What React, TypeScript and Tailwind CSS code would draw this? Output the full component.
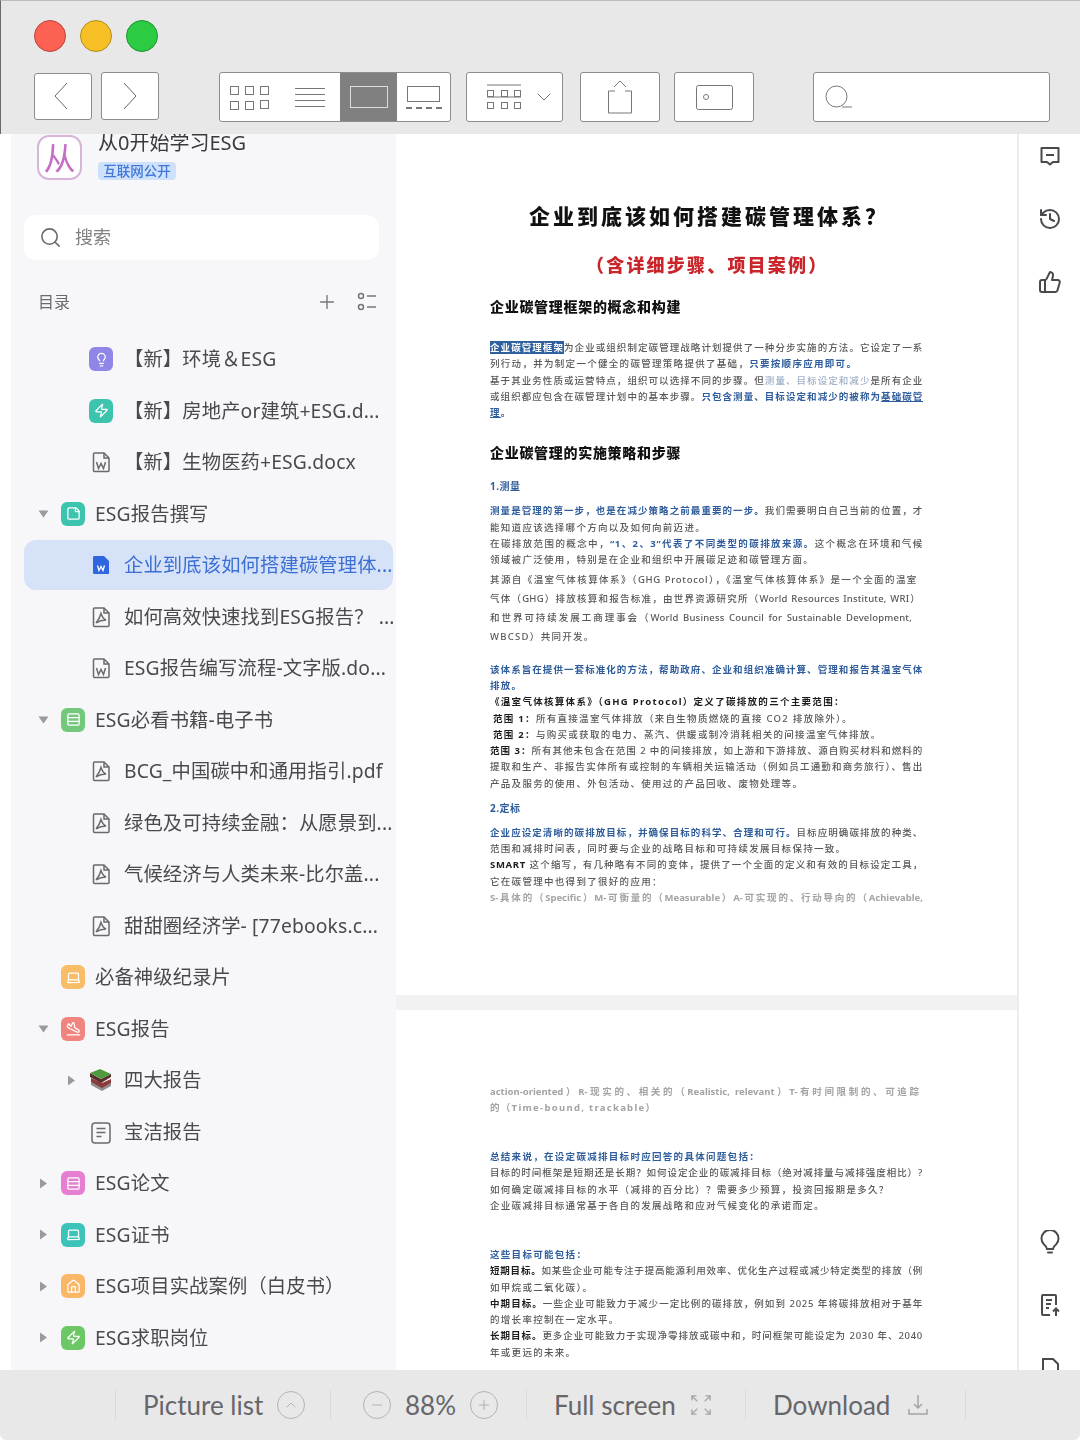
import React from 'react';
import { ChevronDown, ChevronRight, History, Home, Laptop, Lightbulb, Minus, PlaneLanding, Plus, Rows3, Search, StickyNote, ThumbsUp, Zap } from 'lucide-react';

const cjk = { fontFamily: '"Noto Sans", "Noto Sans CJK SC", sans-serif' };

function WordIcon({ active = false }: { active?: boolean }) {
  if (active) {
    return (
      <svg viewBox="0 0 24 24" className="w-6 h-6">
        <path d="M5 3h10l5 5v13H5.500a1.500 1.500 0 0 1-1.500-1.500V4.500A1.500 1.500 0 0 1 5 3z" fill="#2f66e0" />
        <path d="M8.500 12.500l1.500 5 2-4 2 4 1.500-5" fill="none" stroke="#fff" strokeWidth="1.300" />
      </svg>
    );
  }
  return (
    <svg viewBox="0 0 24 24" className="w-6 h-6" fill="none" stroke="#6a6a6e" strokeWidth="1.500">
      <path d="M5.500 3H15l5 5v12.500a1 1 0 0 1-1 1H5.500a1 1 0 0 1-1-1V4a1 1 0 0 1 1-1z" />
      <path d="M15 3v5h5" />
      <path d="M7.500 12l2 6.500 2.500-5 2.500 5 2-6.500" />
    </svg>
  );
}

function PdfIcon() {
  return (
    <svg viewBox="0 0 24 24" className="w-6 h-6" fill="none" stroke="#6a6a6e" strokeWidth="1.500">
      <path d="M5.500 3H15l5 5v12.500a1 1 0 0 1-1 1H5.500a1 1 0 0 1-1-1V4a1 1 0 0 1 1-1z" />
      <path d="M15 3v5h5" />
      <path d="M12 8.500c-.8 3-2.500 6.500-5 9.500 3-2 6.500-3 10-3-2.500-1-4-3.500-5-6.500z" />
    </svg>
  );
}

function NoteIcon() {
  return (
    <svg viewBox="0 0 24 24" className="w-6 h-6" fill="none" stroke="#6a6a6e" strokeWidth="1.500">
      <rect x="3" y="3" width="18" height="20" rx="3" />
      <path d="M7.500 8.500h9M7.500 12.500h9M7.500 16.500h5" />
    </svg>
  );
}

function BooksIcon() {
  return (
    <svg viewBox="0 0 24 24" className="w-6 h-6">
      <path d="M2 14l11 5 9-4v3l-9 5-11-6z" fill="#8f8f8f" />
      <path d="M2 10l11 5 9-4v4l-9 5-11-6z" fill="#8c3a3a" />
      <path d="M1 5l11 6 10-5v3l-10 6-11-6z" fill="#5b2d2d" />
      <path d="M1 5l10-4 11 5-10 5z" fill="#4f9a3f" />
    </svg>
  );
}

function Tile({ color, children }: { color: string; children: React.ReactNode }) {
  return <span className={`w-6 h-6 rounded-md flex items-center justify-center shrink-0 ${color}`}>{children}</span>;
}

const tileIcon = 'w-[15px] h-[15px] text-white';

const rows = [
  { level: 2, text: '【新】环境＆ESG', icon: <Tile color="bg-[#8f86e8]"><Lightbulb className={tileIcon} /></Tile> },
  { level: 2, text: '【新】房地产or建筑+ESG.d...', icon: <Tile color="bg-[#3cc4ae]"><Zap className={tileIcon} /></Tile> },
  { level: 2, text: '【新】生物医药+ESG.docx', icon: <WordIcon /> },
  { level: 1, arrow: 'down', text: 'ESG报告撰写', icon: <Tile color="bg-[#3cc4ae]"><StickyNote className={tileIcon} /></Tile> },
  { level: 2, active: true, text: '企业到底该如何搭建碳管理体...', icon: <WordIcon active /> },
  { level: 2, text: '如何高效快速找到ESG报告？ ...', icon: <PdfIcon /> },
  { level: 2, text: 'ESG报告编写流程-文字版.do...', icon: <WordIcon /> },
  { level: 1, arrow: 'down', text: 'ESG必看书籍-电子书', icon: <Tile color="bg-[#74c87c]"><Rows3 className={tileIcon} /></Tile> },
  { level: 2, text: 'BCG_中国碳中和通用指引.pdf', icon: <PdfIcon /> },
  { level: 2, text: '绿色及可持续金融：从愿景到...', icon: <PdfIcon /> },
  { level: 2, text: '气候经济与人类未来-比尔盖...', icon: <PdfIcon /> },
  { level: 2, text: '甜甜圈经济学- [77ebooks.c...', icon: <PdfIcon /> },
  { level: 1, text: '必备神级纪录片', icon: <Tile color="bg-[#f9bd68]"><Laptop className={tileIcon} /></Tile> },
  { level: 1, arrow: 'down', text: 'ESG报告', icon: <Tile color="bg-[#f0857f]"><PlaneLanding className={tileIcon} /></Tile> },
  { level: 2, arrow: 'right', text: '四大报告', icon: <BooksIcon /> },
  { level: 2, text: '宝洁报告', icon: <NoteIcon /> },
  { level: 1, arrow: 'right', text: 'ESG论文', icon: <Tile color="bg-[#e77fd0]"><Rows3 className={tileIcon} /></Tile> },
  { level: 1, arrow: 'right', text: 'ESG证书', icon: <Tile color="bg-[#3cc4bb]"><Laptop className={tileIcon} /></Tile> },
  { level: 1, arrow: 'right', text: 'ESG项目实战案例（白皮书）', icon: <Tile color="bg-[#f9b768]"><Home className={tileIcon} /></Tile> },
  { level: 1, arrow: 'right', text: 'ESG求职岗位', icon: <Tile color="bg-[#6cc765]"><Zap className={tileIcon} /></Tile> },
];

function Arrow({ dir }: { dir?: string }) {
  if (!dir) return <span className="w-[11px] shrink-0" />;
  return (
    <span className="w-[11px] h-[11px] shrink-0 flex items-center justify-center">
      <svg viewBox="0 0 11 11" className="w-[11px] h-[11px]" fill="#9a9a9e">
        {dir === 'down' ? <path d="M0.500 2.500h10l-5 7z" /> : <path d="M2 0.500l7 5-7 5z" />}
      </svg>
    </span>
  );
}

function Sidebar() {
  return (
    <aside className="w-[385px] ml-[11px] bg-[#f7f7fa] shrink-0 overflow-hidden blur-[0.3px]">
      <div className="flex h-[45px] mt-px pl-[26px] gap-4">
        <div className="w-[45px] h-[45px] rounded-xl border-2 border-[#d8b4d8] bg-white flex items-center justify-center text-[32px] leading-none text-[#c46fc4]">从</div>
        <div className="-mt-[2px]">
          <div className="h-5 text-[20px] leading-5 text-[#3a3a3d] whitespace-nowrap">从0开始学习ESG</div>
          <div className="mt-[9px] w-[78px] h-[18px] rounded bg-[#cfe0fb] text-[13.500px] leading-[18px] text-center font-medium text-[#3f78d8]">互联网公开</div>
        </div>
      </div>

      <div className="ml-[13px] mt-[35px] w-[355px] h-[45px] rounded-xl bg-white flex items-center pl-[15px] gap-[13px] text-[18px] text-[#808083]">
        <Search className="w-[23px] h-[23px] text-[#6c6c70]" strokeWidth={1.7} />
        搜索
      </div>

      <div className="mt-[30px] h-6 flex items-center pl-[27px] text-[16px] text-[#6a6a6e]">
        <span>目录</span>
        <Plus className="w-[22px] h-[22px] ml-[246px] text-[#77777b]" strokeWidth={1.5} />
        <svg viewBox="0 0 22 22" className="w-[22px] h-[22px] ml-[18px]" fill="none" stroke="#77777b" strokeWidth="1.500">
          <circle cx="5" cy="5" r="2.500" />
          <circle cx="5" cy="16" r="2.500" />
          <path d="M11 5h9M11 16h9" />
        </svg>
      </div>

      <div className="ml-[13px] w-[369px] mt-[19.250px]">
        {rows.map((row) => (
          <div key={row.text} className="h-[51.500px] flex items-center">
            <div className={`w-full h-[50px] flex items-center rounded-xl text-[19.300px] tracking-[0.150px] whitespace-nowrap ${row.level === 1 ? 'pl-[14px]' : 'pl-[42px]'} ${row.active ? 'bg-[#d6e2f7] text-[#3b6fd4]' : 'text-[#4a4a4e]'}`}>
              <Arrow dir={row.arrow} />
              <span className="ml-3 w-6 h-6 shrink-0 flex items-center justify-center">{row.icon}</span>
              <span className={`pt-px ${row.level === 1 ? 'ml-[10px]' : 'ml-[11px]'}`}>{row.text}</span>
            </div>
          </div>
        ))}
      </div>
    </aside>
  );
}

function Line({ children, j = true, className = '' }: { children: React.ReactNode; j?: boolean; className?: string }) {
  return (
    <div className={`whitespace-nowrap text-[9.500px] font-medium text-[#58585b] ${j ? 'tracking-[0.700px] [text-align-last:justify]' : 'tracking-[1.300px]'} ${className || 'h-[16.250px] leading-[16.250px]'}`}>
      {children}
    </div>
  );
}

function B({ children }: { children: React.ReactNode }) {
  return <span className="font-bold text-[#2f5d9c]">{children}</span>;
}

function K({ children }: { children: React.ReactNode }) {
  return <span className="font-bold text-[#1c1c1e]">{children}</span>;
}

function H({ children, className = '' }: { children: React.ReactNode; className?: string }) {
  return <div className={`h-5 leading-5 text-[14px] tracking-[0.700px] font-black text-[#111] ${className}`}>{children}</div>;
}

function Sub({ children, className = '' }: { children: React.ReactNode; className?: string }) {
  return <div className={`h-4 leading-4 text-[10px] tracking-[0.500px] font-bold text-[#2f5d9c] ${className}`}>{children}</div>;
}

function Document() {
  return (
    <main className="flex-1 flex flex-col min-w-0 overflow-hidden bg-[#f2f2f3] blur-[0.4px]">
      <section className="h-[861px] shrink-0 bg-white pl-[94px] pr-[94px]">
        <div className="mt-[67px] h-[30px] leading-[30px] text-[21px] tracking-[3px] font-black text-[#111] whitespace-nowrap ml-[39px]">企业到底该如何搭建碳管理体系？</div>
        <div className="mt-[21px] h-[26px] leading-[26px] text-[18px] tracking-[2.200px] font-black text-[#c9252b] whitespace-nowrap ml-[96px]">（含详细步骤、项目案例）</div>
        <H className="mt-[19px]">企业碳管理框架的概念和构建</H>
        <div className="mt-[23px]">
          <Line><span className="bg-[#2e5f9e] text-white font-bold">企业碳管理框架</span>为企业或组织制定碳管理战略计划提供了一种分步实施的方法。它设定了一系</Line>
          <Line j={false}>列行动，并为制定一个健全的碳管理策略提供了基础，<B>只要按顺序应用即可。</B></Line>
          <Line>基于其业务性质或运营特点，组织可以选择不同的步骤。但<span className="text-[#9fb0c8]">测量、目标设定和减少</span>是所有企业</Line>
          <Line>或组织都应包含在碳管理计划中的基本步骤。<B>只包含测量、目标设定和减少的被称为<span className="underline">基础碳管</span></B></Line>
          <Line j={false}><B><span className="underline">理</span>。</B></Line>
        </div>
        <H className="mt-[22px]">企业碳管理的实施策略和步骤</H>
        <Sub className="mt-[15px]">1.测量</Sub>
        <div className="mt-[9px]">
          <Line><B>测量是管理的第一步，也是在减少策略之前最重要的一步。</B>我们需要明白自己当前的位置，才</Line>
          <Line j={false}>能知道应该选择哪个方向以及如何向前迈进。</Line>
          <Line>在碳排放范围的概念中，<B>“1、2、3”代表了不同类型的碳排放来源。</B>这个概念在环境和气候</Line>
          <Line j={false}>领域被广泛使用，特别是在企业和组织中开展碳足迹和碳管理方面。</Line>
        </div>
        <div className="mt-[2px]">
          <Line className="h-[19px] leading-[19px] w-[427px]">其源自《温室气体核算体系》（GHG Protocol），《温室气体核算体系》是一个全面的温室</Line>
          <Line className="h-[19px] leading-[19px] w-[430px] !tracking-[0.200px]">气体（GHG）排放核算和报告标准，由世界资源研究所（World Resources Institute, WRI）</Line>
          <Line className="h-[19px] leading-[19px] w-[422px] !tracking-[0.200px]">和世界可持续发展工商理事会（World Business Council for Sustainable Development,</Line>
          <Line j={false} className="h-[19px] leading-[19px]">WBCSD）共同开发。</Line>
        </div>
        <div className="mt-[15.500px]">
          <Line><B>该体系旨在提供一套标准化的方法，帮助政府、企业和组织准确计算、管理和报告其温室气体</B></Line>
          <Line j={false}><B>排放。</B></Line>
          <Line j={false} className="h-[16.250px] leading-[16.250px] w-[350px]"><K>《温室气体核算体系》（GHG Protocol）定义了碳排放的三个主要范围：</K></Line>
          <Line j={false}><span className="ml-[3px]" /><K>范围 1：</K>所有直接温室气体排放（来自生物质燃烧的直接 CO2 排放除外）。</Line>
          <Line j={false}><span className="ml-[3px]" /><K>范围 2：</K>与购买或获取的电力、蒸汽、供暖或制冷消耗相关的间接温室气体排放。</Line>
          <Line><K>范围 3：</K>所有其他未包含在范围 2 中的间接排放，如上游和下游排放、源自购买材料和燃料的</Line>
          <Line>提取和生产、非报告实体所有或控制的车辆相关运输活动（例如员工通勤和商务旅行）、售出</Line>
          <Line j={false}>产品及服务的使用、外包活动、使用过的产品回收、废物处理等。</Line>
        </div>
        <Sub className="mt-[8px]">2.定标</Sub>
        <div className="mt-[9px]">
          <Line><B>企业应设定清晰的碳排放目标，并确保目标的科学、合理和可行。</B>目标应明确碳排放的种类、</Line>
          <Line j={false}>范围和减排时间表，同时要与企业的战略目标和可持续发展目标保持一致。</Line>
          <Line><K>SMART</K> 这个缩写，有几种略有不同的变体，提供了一个全面的定义和有效的目标设定工具，</Line>
          <Line j={false}>它在碳管理中也得到了很好的应用：</Line>
          <Line className="h-[16.250px] leading-[16.250px] !text-[#a3a3a6] !font-bold !tracking-[0px]">S-具体的（Specific）M-可衡量的（Measurable）A-可实现的、行动导向的（Achievable,</Line>
        </div>
      </section>

      <section className="flex-1 mt-[15px] bg-white pl-[94px] pr-[94px]">
        <div className="mt-[74px]">
          <Line className="h-[16.250px] leading-[16.250px] w-[429px] !text-[#a3a3a6] !font-bold !tracking-[0px]">action-oriented）R-现实的、相关的（Realistic, relevant）T-有时间限制的、可追踪</Line>
          <Line j={false} className="h-[16.250px] leading-[16.250px] !text-[#a3a3a6] !font-bold">的（Time-bound, trackable）</Line>
        </div>
        <div className="mt-[32.500px]">
          <Line j={false}><B>总结来说，在设定碳减排目标时应回答的具体问题包括：</B></Line>
          <Line>目标的时间框架是短期还是长期？如何设定企业的碳减排目标（绝对减排量与减排强度相比）?</Line>
          <Line j={false}>如何确定碳减排目标的水平（减排的百分比）？需要多少预算，投资回报期是多久？</Line>
          <Line j={false}>企业碳减排目标通常基于各自的发展战略和应对气候变化的承诺而定。</Line>
        </div>
        <div className="mt-[33px]">
          <Line j={false}><B>这些目标可能包括：</B></Line>
          <Line><K>短期目标。</K>如某些企业可能专注于提高能源利用效率、优化生产过程或减少特定类型的排放（例</Line>
          <Line j={false}>如甲烷或二氧化碳）。</Line>
          <Line><K>中期目标。</K>一些企业可能致力于减少一定比例的碳排放，例如到 2025 年将碳排放相对于基年</Line>
          <Line j={false}>的增长率控制在一定水平。</Line>
          <Line><K>长期目标。</K>更多企业可能致力于实现净零排放或碳中和，时间框架可能设定为 2030 年、2040</Line>
          <Line j={false}>年或更远的未来。</Line>
        </div>
      </section>
    </main>
  );
}

function RightRail() {
  const cls = 'w-6 h-6 text-[#4a4a4e]';
  return (
    <div className="w-[63px] shrink-0 bg-white border-l-2 border-[#ececee] flex flex-col justify-between items-center overflow-hidden pt-[10px]">
      <div className="flex flex-col gap-[39px]">
        <svg viewBox="0 0 24 24" className={cls} fill="none" stroke="currentColor" strokeWidth="2" strokeLinejoin="round">
          <path d="M3.500 4h17v14H15l-3 2.500L9 18H3.500z" />
          <path d="M8 11h8" />
        </svg>
        <History className={cls} strokeWidth={2} />
        <ThumbsUp className={cls} strokeWidth={2} />
      </div>
      <div className="flex flex-col gap-[39px] -mb-[10px]">
        <svg viewBox="0 0 24 24" className={cls} fill="none" stroke="currentColor" strokeWidth="2" strokeLinecap="round">
          <path d="M9 19c0-2-1-3-3-4.500A8.500 8.500 0 1 1 18 14.500c-2 1.500-3 2.500-3 4.500z" />
          <path d="M10 22.500h4" />
        </svg>
        <svg viewBox="0 0 24 24" className={cls} fill="none" stroke="currentColor" strokeWidth="2">
          <path d="M12 22H5a1 1 0 0 1-1-1V3a1 1 0 0 1 1-1h12a1 1 0 0 1 1 1v9" />
          <path d="M8 7h6M8 11h5M8 15h3" />
          <path d="M18 23v-7M15 18.500l3-3 3 3" />
        </svg>
        <svg viewBox="0 0 24 24" className={cls} fill="none" stroke="currentColor" strokeWidth="2">
          <path d="M5 3h10l5 5v13H5z" />
          <path d="M8 16h8" />
        </svg>
      </div>
    </div>
  );
}

const btn = 'bg-white border border-[#8d8d8d] rounded-[3px] shrink-0 flex items-center justify-center';

function Toolbar() {
  return (
    <header className="h-[134px] shrink-0 bg-[#e8e8e8] border-t border-t-[#bdbdbd] border-l border-l-[#6a6a6a]">
      <div className="flex gap-[14px] pl-[33px] pt-[19px]">
        <span className="w-8 h-8 rounded-full bg-[#fd6152] border border-[#b8473c]" />
        <span className="w-8 h-8 rounded-full bg-[#f6c026] border border-[#b48d1c]" />
        <span className="w-8 h-8 rounded-full bg-[#2bcb43] border border-[#1f9531]" />
      </div>
      <div className="flex items-center mt-[20px] pl-[33px] h-[50px]">
        <div className={`${btn} w-[58px] h-[47px] -mt-[2px] pr-1`}>
          <svg viewBox="0 0 16 28" className="w-4 h-7" fill="none" stroke="#666" strokeWidth="1"><path d="M14 1L2 14l12 13" /></svg>
        </div>
        <div className={`${btn} w-[58px] h-[48px] ml-[9px] -mt-[2px]`}>
          <svg viewBox="0 0 16 28" className="w-4 h-7" fill="none" stroke="#666" strokeWidth="1"><path d="M2 1l12 13L2 27" /></svg>
        </div>
        <div className={`${btn} w-[232px] h-[50px] ml-[60px] overflow-hidden !justify-start`}>
          <div className="w-[120px] flex items-center h-full">
            <svg viewBox="0 0 106 28" className="w-[106px] h-7" fill="none" stroke="#777" strokeWidth="1">
              <rect x="10.500" y="3.500" width="8" height="8" /><rect x="25.500" y="3.500" width="8" height="8" /><rect x="40.500" y="3.500" width="8" height="8" />
              <rect x="10.500" y="18.500" width="8" height="8" /><rect x="25.500" y="18.500" width="8" height="8" /><rect x="40.500" y="17.500" width="8" height="8" />
              <path d="M75 5.500h30M75 11.500h30M75 17.500h30M75 23.500h30" />
            </svg>
          </div>
          <div className="w-[57px] h-full bg-[#808080] flex items-center justify-center">
            <span className="w-[38px] h-[22px] border border-[#ddd]" />
          </div>
          <div className="flex-1 flex flex-col items-center justify-center gap-[5px]">
            <span className="w-[33px] h-[16px] border border-[#777]" />
            <span className="w-[36px] h-[2px] border-t-2 border-dashed border-[#777]" />
          </div>
        </div>
        <div className={`${btn} w-[97px] h-[50px] ml-[15px] gap-[10px] !justify-start pl-[19px]`}>
          <svg viewBox="0 0 36 26" className="w-9 h-[26px]" fill="none" stroke="#777" strokeWidth="1">
            <path d="M1 1h34M1 13h34" />
            <rect x="1.500" y="6.500" width="6" height="6" /><rect x="15.500" y="6.500" width="6" height="6" /><rect x="28.500" y="6.500" width="6" height="6" />
            <rect x="1.500" y="18.500" width="6" height="6" /><rect x="15.500" y="18.500" width="6" height="6" /><rect x="28.500" y="18.500" width="6" height="6" />
          </svg>
          <ChevronDown className="w-6 h-6 text-[#777]" strokeWidth={1} />
        </div>
        <div className={`${btn} w-[80px] h-[50px] ml-[17px]`}>
          <svg viewBox="0 0 26 36" className="w-[26px] h-9" fill="none" stroke="#777" strokeWidth="1">
            <path d="M7 8l6-6 6 6" />
            <path d="M8 12H1.500v22h23V12H18" />
          </svg>
        </div>
        <div className={`${btn} w-[80px] h-[50px] ml-[14px]`}>
          <svg viewBox="0 0 37 25" className="w-[37px] h-[25px]" fill="none" stroke="#777" strokeWidth="1">
            <rect x="0.500" y="0.500" width="36" height="24" rx="2" />
            <circle cx="10" cy="12" r="2.500" />
          </svg>
        </div>
        <div className={`${btn} w-[237px] h-[50px] ml-[59px] !justify-start pl-[11px]`}>
          <svg viewBox="0 0 28 24" className="w-7 h-6" fill="none" stroke="#777" strokeWidth="1">
            <circle cx="11.500" cy="11.500" r="10.500" />
            <path d="M17 22h10" />
          </svg>
        </div>
      </div>
    </header>
  );
}

function Round({ children }: { children: React.ReactNode }) {
  return <span className="w-[28px] h-[28px] rounded-full border border-[#b4b4b6] flex items-center justify-center text-[#a4a4a6] shrink-0">{children}</span>;
}

function BottomBar() {
  const cell = 'h-[30px] border-l border-[#dadada] flex items-center text-[26px] font-normal text-[#66666a] whitespace-nowrap';
  return (
    <footer className="h-[70px] shrink-0 bg-[#e8e8e8] rounded-b-md flex items-center pl-[115px]" style={{ fontFamily: 'Lato, sans-serif' }}>
      <div className={`${cell} w-[215px] pl-[27px] gap-[14px]`}>
        Picture list
        <Round><ChevronRight className="w-4 h-4 -rotate-90" strokeWidth={1.2} /></Round>
      </div>
      <div className={`${cell} w-[196px] pl-[32px] gap-[14px]`}>
        <Round><Minus className="w-4 h-4" strokeWidth={1.2} /></Round>
        88%
        <Round><Plus className="w-4 h-4" strokeWidth={1.2} /></Round>
      </div>
      <div className={`${cell} w-[219px] pl-[27px] gap-[15px]`}>
        Full screen
        <svg viewBox="0 0 22 22" className="w-5 h-5" fill="none" stroke="#a4a4a6" strokeWidth="1.500">
          <path d="M1 1l6 6M15 7l6-6M1 21l6-6M15 15l6 6" />
          <path d="M1 6V1h5M16 1h5v5M1 16v5h5M16 21h5v-5" />
        </svg>
      </div>
      <div className={`${cell} w-[221px] pl-[27px] gap-[17px] border-r`}>
        Download
        <svg viewBox="0 0 22 22" className="w-[22px] h-[22px]" fill="none" stroke="#a4a4a6" strokeWidth="1.500">
          <path d="M11 1v13M7 10l4 4 4-4" />
          <path d="M2 15v5h18v-5" />
        </svg>
      </div>
    </footer>
  );
}

export default function App() {
  return (
    <div className="w-[1080px] h-[1440px] flex flex-col overflow-hidden bg-white" style={cjk}>
      <Toolbar />
      <div className="flex-1 flex min-h-0 overflow-hidden">
        <Sidebar />
        <Document />
        <RightRail />
      </div>
      <BottomBar />
    </div>
  );
}
